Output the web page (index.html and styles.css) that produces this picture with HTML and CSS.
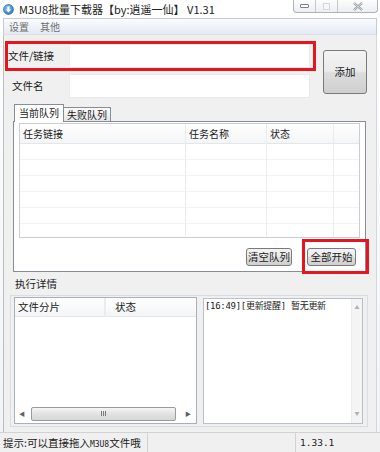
FILE: index.html
```html
<!DOCTYPE html>
<html lang="zh-CN">
<head>
    <meta charset="UTF-8">
    <title>M3U8批量下载器</title>
    <link rel="stylesheet" href="styles.css">
</head>
<body>
    <div class="window">
        <div class="titlebar">
            <svg class="app-icon" width="11" height="11" viewBox="0 0 11 11">
                <defs>
                    <radialGradient id="ball" cx="40%" cy="35%" r="70%">
                        <stop offset="0" stop-color="#8cc4f2"/>
                        <stop offset="1" stop-color="#2a76c6"/>
                    </radialGradient>
                </defs>
                <circle cx="5.5" cy="5.5" r="5" fill="url(#ball)" stroke="#2563a8" stroke-width="0.6"/>
                <path d="M4.4 2.6h2.2v3h1.6L5.5 8.6 2.8 5.6h1.6z" fill="#fff"/>
            </svg>
            <span class="title">M3U8批量下载器【by:逍遥一仙】 V1.31</span>
            <div class="caption">
                <span class="cap cap-min"><i></i></span>
                <span class="cap cap-max"><i></i></span>
                <span class="cap cap-close">
                    <svg width="10" height="9" viewBox="0 0 10 9">
                        <path d="M1 1l8 7M9 1L1 8" stroke="#8a8f99" stroke-width="2.2" fill="none"/>
                        <path d="M1 1l8 7M9 1L1 8" stroke="#f4f5f7" stroke-width="0.8" fill="none"/>
                    </svg>
                </span>
            </div>
        </div>

        <div class="menubar">
            <span>设置</span>
            <span>其他</span>
        </div>

        <div class="client">
            <div class="source">
                <div class="fields">
                    <div class="field marked">
                        <label>文件/链接</label>
                        <div class="textbox"></div>
                    </div>
                    <div class="field">
                        <label class="indent">文件名</label>
                        <div class="textbox"></div>
                    </div>
                </div>
                <button class="btn btn-add">添加</button>
            </div>

            <div class="tabs">
                <div class="tab-strip">
                    <span class="tab active">当前队列</span>
                    <span class="tab">失败队列</span>
                </div>
                <div class="tab-panel">
                    <div class="listview">
                        <div class="col col-link"><div class="th">任务链接</div><div class="cells"></div></div>
                        <div class="col col-name"><div class="th">任务名称</div><div class="cells"></div></div>
                        <div class="col col-state"><div class="th">状态</div><div class="cells"></div></div>
                        <div class="col col-rest"><div class="th"></div><div class="cells"></div></div>
                    </div>
                    <div class="actions">
                        <button class="btn btn-small">清空队列</button>
                        <div class="mark-box">
                            <button class="btn btn-small">全部开始</button>
                        </div>
                    </div>
                </div>
            </div>

            <div class="group-title">执行详情</div>
            <div class="group">
                <div class="chunks">
                    <div class="chunk-head">
                        <div class="th th-part">文件分片</div>
                        <div class="th th-state">状态</div>
                        <div class="th th-fill"></div>
                    </div>
                    <div class="chunk-body"></div>
                    <div class="hscroll">
                        <span class="arrow">&#9664;</span>
                        <div class="thumb"><span class="grip"><i></i><i></i><i></i></span></div>
                        <span class="arrow">&#9654;</span>
                    </div>
                </div>
                <div class="log">
                    <div class="log-text">[16:49][更新提醒] 暂无更新</div>
                    <div class="vscroll">
                        <span class="arrow">&#9650;</span>
                        <span class="arrow">&#9660;</span>
                    </div>
                </div>
            </div>
        </div>

        <div class="statusbar">
            <div class="status status-tip">提示:可以直接拖入<span class="mono">M3U8</span>文件哦</div>
            <div class="status status-mid"></div>
            <div class="status status-ver">1.33.1</div>
        </div>
    </div>
</body>
</html>
```

FILE: styles.css
```css
* {
    box-sizing: border-box;
}
body {
    margin: 0;
    width: 380px;
    height: 452px;
    overflow: hidden;
    font-family: "Noto Sans CJK SC", "Liberation Sans", sans-serif;
    font-size: 10.5px;
    color: #1a1a1a;
    background: #f7f8fb;
}
.window {
    height: 452px;
    display: flex;
    flex-direction: column;
    padding: 0 3px;
    background: linear-gradient(#ffffff, #f1f3f7);
}

/* title bar */
.titlebar {
    height: 18px;
    display: flex;
    align-items: flex-start;
}
.app-icon {
    margin: 4px 5px 0 0;
    flex: none;
}
.title {
    line-height: 18px;
    font-size: 11px;
    color: #222;
    white-space: nowrap;
}
.caption {
    margin-left: auto;
    margin-right: -1px;
    display: flex;
    height: 13px;
    border: 1px solid #aeb4bf;
    border-top: none;
    border-radius: 0 0 4px 4px;
    background: linear-gradient(#fdfdfe, #eceef2);
}
.cap {
    display: flex;
    align-items: center;
    justify-content: center;
    width: 22px;
    border-right: 1px solid #c4c8cf;
}
.cap-close {
    width: 39px;
    border-right: none;
}
.cap-min i {
    width: 9px;
    height: 4px;
    border: 1px solid #7b818c;
    border-radius: 1px;
    background: #fff;
}
.cap-max i {
    width: 7px;
    height: 7px;
    border: 1px solid #d3d6dc;
    background: #f7f7f9;
}

/* menu */
.menubar {
    height: 17px;
    display: flex;
    gap: 11px;
    padding-left: 5px;
    border: 1px solid #c6cad3;
    border-bottom-color: #d9dde4;
    background: linear-gradient(#fbfcfe, #e4e9f3);
    line-height: 15px;
    font-size: 10px;
    color: #6f6f6f;
}

/* client area */
.client {
    flex: 1;
    background: #f0f0f0;
    border-left: 1px solid #b9bdc4;
    border-right: 1px solid #d4d7dc;
    padding: 6px 0 0 1px;
}
.source {
    display: flex;
    align-items: center;
}
.fields {
    width: 311px;
}
.field {
    height: 30px;
    display: flex;
    align-items: center;
    border: 3px solid transparent;
}
.field.marked {
    border-color: #e4161e;
}
.field label {
    width: 61px;
    line-height: 14px;
}
.field label.indent {
    padding-left: 4px;
}
.textbox {
    width: 241px;
    height: 24px;
    background: #fff;
    border: 1px solid #eaeaea;
}
.btn {
    font-family: inherit;
    font-size: 10.5px;
    color: #1a1a1a;
    border: 1px solid #7a7a7a;
    border-radius: 3px;
    background: linear-gradient(#f3f3f3 0%, #ebebeb 48%, #dddddd 52%, #cfcfcf 100%);
    padding: 0;
    line-height: 14px;
}
.btn-add {
    width: 44px;
    height: 44px;
    margin: 2px 0 0 7px;
}

/* tabs */
.tabs {
    margin: 3px 0 0 8px;
    width: 353px;
}
.tab-strip {
    height: 17px;
    display: flex;
    align-items: flex-end;
    padding-left: 1px;
    font-size: 10px;
}
.tab {
    height: 14px;
    padding: 0 3px;
    border: 1px solid #898c95;
    border-bottom: none;
    border-left: none;
    background: linear-gradient(#fbfbfb, #e6e6e6);
    line-height: 13px;
}
.tab.active {
    position: relative;
    z-index: 1;
    height: 18px;
    margin-bottom: -1px;
    padding: 0 4px;
    border-left: 1px solid #898c95;
    background: #fff;
    line-height: 16px;
}
.tab-panel {
    height: 151px;
    border: 1px solid #898c95;
    background: #fff;
    padding: 1px 5px 0 5px;
}
.listview {
    height: 115px;
    display: flex;
    border: 1px solid #c9ced6;
    background: #fff;
    font-size: 10px;
}
.col {
    display: flex;
    flex-direction: column;
    border-right: 1px solid #ececec;
}
.col-link { width: 166px; }
.col-name { width: 81px; }
.col-state { width: 67px; }
.col-rest { flex: 1; border-right: none; }
.th {
    height: 20px;
    padding-left: 3px;
    line-height: 19px;
    background: linear-gradient(#ffffff, #f4f5f7);
    border-bottom: 1px solid #e4e6ea;
    white-space: nowrap;
}
.cells {
    flex: 1;
    background: repeating-linear-gradient(to bottom, transparent 0 15px, #f3f3f3 15px 16px);
}
.actions {
    display: flex;
    justify-content: flex-end;
    align-items: flex-start;
    margin: 1px -9px 0 0;
    position: relative;
    z-index: 1;
}
.btn-small {
    width: 46px;
    height: 18px;
}
.actions > .btn-small {
    margin: 9px 10px 0 0;
}
.mark-box {
    border: 3px solid #e4161e;
    padding: 6px 10px 5px 2px;
}
.mark-box .btn-small {
    width: 49px;
}

/* execution detail */
.group-title {
    margin: 5px 0 0 10px;
    line-height: 14px;
}
.group {
    margin: 4px 0 0 5px;
    width: 358px;
    height: 132px;
    border: 1px solid #d9dde3;
    display: flex;
    gap: 6px;
    padding: 1px 0 0 3px;
}
.chunks {
    width: 183px;
    height: 127px;
    border: 1px solid #a9b0ba;
    background: #fff;
    display: flex;
    flex-direction: column;
}
.chunk-head {
    display: flex;
}
.chunk-head .th {
    height: 19px;
    padding-left: 3px;
    line-height: 18px;
}
.th-part {
    width: 92px;
    border-right: 2px solid #ececec;
}
.th-state {
    width: 88px;
    padding-left: 9px !important;
}
.th-fill {
    flex: 1;
}
.chunk-body {
    flex: 1;
}
.hscroll {
    height: 15px;
    margin-bottom: 2px;
    display: flex;
    align-items: center;
    padding: 0 5px 0 4px;
}
.arrow {
    font-size: 6px;
    color: #606060;
    line-height: 8px;
}
.thumb {
    width: 145px;
    height: 14px;
    margin: 0 auto 0 6px;
    border: 1px solid #9b9b9b;
    border-radius: 2px;
    background: linear-gradient(#f5f5f5, #e2e2e2 50%, #d6d6d6);
    display: flex;
    justify-content: center;
    align-items: center;
}
.grip {
    display: flex;
    gap: 1px;
}
.grip i {
    width: 1px;
    height: 5px;
    background: #7a7a7a;
}
.log {
    width: 160px;
    height: 126px;
    margin-top: 1px;
    border: 1px solid #b9c0c9;
    background: #fff;
    display: flex;
}
.log-text {
    flex: 1;
    padding: 1px 0 0 1px;
    font-family: "DejaVu Sans Mono", "Noto Sans CJK SC", monospace;
    font-size: 9px;
    letter-spacing: -0.3px;
    line-height: 12px;
    white-space: nowrap;
    overflow: hidden;
}
.vscroll {
    width: 11px;
    background: #f4f4f4;
    border-left: 1px solid #ececec;
    display: flex;
    flex-direction: column;
    justify-content: space-between;
    align-items: center;
    padding: 4px 0 6px;
}
.vscroll .arrow {
    color: #b0b0b0;
    font-size: 5px;
}

/* status bar */
.statusbar {
    height: 20px;
    display: flex;
    align-items: center;
    border-top: 1px solid #d2d2d2;
    background: #f0f0f0;
    margin: 0 -3px;
    padding: 0 6px 0 3px;
}
.status {
    height: 100%;
    line-height: 19px;
    white-space: nowrap;
}
.status-tip {
    width: 145px;
    border-right: 1px solid #d2d2d2;
}
.mono {
    font-family: "DejaVu Sans Mono", monospace;
    font-size: 8px;
}
.status-mid {
    width: 148px;
    border-right: 1px solid #d2d2d2;
}
.status-ver {
    flex: 1;
    padding-left: 4px;
    font-family: "DejaVu Sans Mono", monospace;
    font-size: 9.5px;
}
```
